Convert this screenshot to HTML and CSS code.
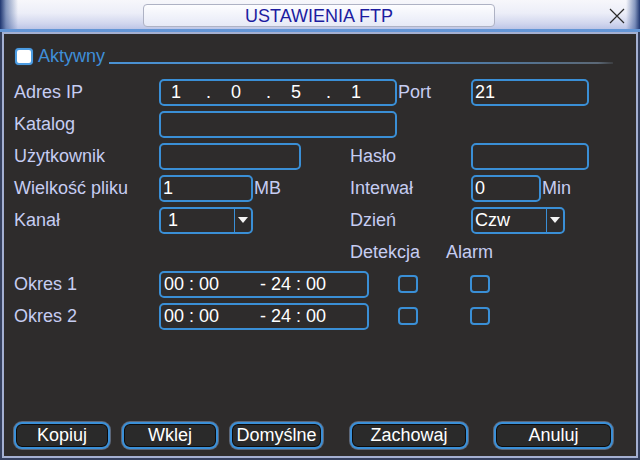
FILE: index.html
```html
<!DOCTYPE html>
<html lang="pl">
<head>
<meta charset="utf-8">
<title>Ustawienia FTP</title>
<link rel="stylesheet" href="styles.css">
</head>
<body>
<div class="window">
  <div class="titlebar">
    <div class="title">USTAWIENIA FTP</div>
    <div class="close">
      <svg width="16" height="16" viewBox="0 0 16 16"><path d="M1 1 L15 15 M15 1 L1 15" stroke="#2a2a2a" stroke-width="1.2" fill="none"/></svg>
    </div>
  </div>
  <div class="frame">
    <div class="section-head">
      <span class="check-on"></span>
      <span class="section-title">Aktywny</span>
      <span class="section-line"></span>
    </div>

    <div class="row">
      <span class="lbl">Adres IP</span>
      <div class="box ip">
        <span class="oct">1</span><span class="dot">.</span>
        <span class="oct">0</span><span class="dot">.</span>
        <span class="oct">5</span><span class="dot">.</span>
        <span class="oct">1</span>
      </div>
      <span class="port-lbl">Port</span>
      <div class="box w118">21</div>
    </div>

    <div class="row">
      <span class="lbl">Katalog</span>
      <div class="box w238"></div>
    </div>

    <div class="row">
      <div class="left">
        <span class="lbl">Użytkownik</span>
        <div class="box w142"></div>
      </div>
      <div class="right">
        <span class="rlbl">Hasło</span>
        <div class="box w118"></div>
      </div>
    </div>

    <div class="row">
      <div class="left">
        <span class="lbl">Wielkość pliku</span>
        <div class="box w94">1</div>
        <span class="unit">MB</span>
      </div>
      <div class="right">
        <span class="rlbl">Interwał</span>
        <div class="box w70">0</div>
        <span class="unit">Min</span>
      </div>
    </div>

    <div class="row">
      <div class="left">
        <span class="lbl">Kanał</span>
        <div class="box combo w94"><span class="combo-val indent">1</span><span class="arrow"></span></div>
      </div>
      <div class="right">
        <span class="rlbl">Dzień</span>
        <div class="box combo w94"><span class="combo-val">Czw</span><span class="arrow"></span></div>
      </div>
    </div>

    <div class="row">
      <div class="left"></div>
      <div class="right">
        <span class="col-head">Detekcja</span>
        <span>Alarm</span>
      </div>
    </div>

    <div class="row">
      <span class="lbl">Okres 1</span>
      <div class="box time"><span>00 : 00</span><span class="time-end">- 24 : 00</span></div>
      <span class="cb cb-det"></span>
      <span class="cb cb-alarm"></span>
    </div>

    <div class="row">
      <span class="lbl">Okres 2</span>
      <div class="box time"><span>00 : 00</span><span class="time-end">- 24 : 00</span></div>
      <span class="cb cb-det"></span>
      <span class="cb cb-alarm"></span>
    </div>

    <div class="spacer"></div>

    <div class="buttons">
      <button class="btn b-kopiuj">Kopiuj</button>
      <button class="btn b-wklej">Wklej</button>
      <button class="btn b-dom">Domyślne</button>
      <button class="btn b-zach">Zachowaj</button>
      <button class="btn b-anul">Anuluj</button>
    </div>
  </div>
</div>
</body>
</html>
```

FILE: styles.css
```css
html, body {
  margin: 0;
  padding: 0;
}
body {
  width: 640px;
  height: 460px;
  overflow: hidden;
  font-family: "Liberation Sans", Arial, sans-serif;
  font-size: 18px;
  background: #3a4260;
}
.window {
  width: 640px;
  height: 460px;
  display: flex;
  flex-direction: column;
  background: #35405e;
}
.titlebar {
  height: 29px;
  flex: none;
  display: flex;
  align-items: flex-start;
  border-bottom: 3px solid #6496d6;
  background:
    linear-gradient(to right, #1f3670 0px, rgba(60,90,150,0.6) 6px, rgba(230,232,245,0) 18px),
    linear-gradient(to left, #1f3670 0px, rgba(60,90,150,0.6) 5px, rgba(230,232,245,0) 14px),
    linear-gradient(to bottom, #f7f7fb 0%, #eceef8 45%, #d2d7ee 80%, #bcc5e6 100%);
}
.title {
  margin-left: 143px;
  margin-top: 4px;
  width: 350px;
  height: 21px;
  border: 1px solid #aeb2c4;
  border-radius: 4px;
  background: linear-gradient(to bottom, #fdfdff, #e6e9f6);
  color: #1c1ca0;
  text-align: center;
  line-height: 22px;
}
.close {
  margin-left: 114px;
  margin-top: 8px;
  width: 16px;
  height: 16px;
}
.close svg {
  display: block;
}
.frame {
  flex: 1;
  margin: 0 2px 2px 2px;
  border: 2px solid #a4b0d2;
  background: #2e2c2c;
  display: flex;
  flex-direction: column;
  padding-left: 10px;
  color: #c6cdf2;
}
.section-head {
  height: 42px;
  flex: none;
  display: flex;
  align-items: center;
  padding-top: 2px;
  box-sizing: border-box;
}
.check-on {
  width: 14px;
  height: 13px;
  margin-left: 1px;
  border: 2px solid #4c9ce2;
  border-radius: 4px;
  background: #ffffff;
  box-shadow: 0 0 1px #2f6fb0;
}
.section-title {
  margin-left: 5px;
  color: #3f8fd8;
}
.section-line {
  flex: 1;
  height: 2px;
  margin: 14px 23px 0 4px;
  background: linear-gradient(to right, #4a92d4 0%, #4a84bc 60%, #5b6876 97%, rgba(90,100,110,0.3) 100%);
}
.row {
  height: 32px;
  flex: none;
  display: flex;
  align-items: center;
}
.left {
  width: 336px;
  display: flex;
  align-items: center;
}
.right {
  display: flex;
  align-items: center;
}
.lbl {
  width: 145px;
  flex: none;
}
.rlbl {
  width: 121px;
  flex: none;
}
.port-lbl {
  width: 73px;
  padding-left: 1px;
  flex: none;
}
.col-head {
  width: 96px;
}
.box {
  height: 27px;
  box-sizing: border-box;
  border: 2px solid #3a8fd6;
  border-radius: 5px;
  color: #ffffff;
  line-height: 23px;
  padding-left: 2px;
  display: flex;
  align-items: center;
  flex: none;
}
.w238 { width: 238px; }
.w142 { width: 142px; }
.w118 { width: 118px; }
.w94 { width: 94px; }
.w70 { width: 70px; }
.ip {
  width: 238px;
  padding-left: 10px;
}
.oct {
  width: 10px;
  text-align: center;
}
.dot {
  width: 50px;
  padding-left: 25px;
  box-sizing: border-box;
}
.unit {
  margin-left: 1px;
}
.combo {
  padding-left: 2px;
}
.combo-val {
  flex: 1;
}
.combo-val.indent {
  padding-left: 5px;
}
.arrow {
  width: 17px;
  height: 23px;
  border-left: 1px solid #3a8fd6;
  box-sizing: border-box;
  display: flex;
  align-items: center;
  justify-content: center;
}
.arrow::after {
  content: "";
  border-left: 5px solid transparent;
  border-right: 5px solid transparent;
  border-top: 6px solid #f4f4f4;
}
.time {
  width: 210px;
  padding-left: 3px;
}
.time-end {
  margin-left: 41px;
}
.cb {
  width: 20px;
  height: 18px;
  box-sizing: border-box;
  border: 2px solid #3a8fd6;
  border-radius: 4px;
  flex: none;
}
.cb-det {
  margin-left: 29px;
}
.cb-alarm {
  margin-left: 52px;
}
.spacer {
  flex: 1;
}
.buttons {
  flex: none;
  display: flex;
  padding-bottom: 7px;
}
.btn {
  height: 27px;
  box-sizing: border-box;
  border: 2px solid #3b90d8;
  border-radius: 8px;
  background: #2a2a2a;
  box-shadow: inset 0 0 0 1px #0c0c0c, 0 0 0 1px rgba(150,175,215,0.45);
  color: #ffffff;
  font-family: "Liberation Sans", Arial, sans-serif;
  font-size: 18px;
  line-height: 21px;
  padding: 0;
  text-align: center;
}
.b-kopiuj { width: 96px; }
.b-wklej { width: 96px; margin-left: 12px; }
.b-dom { width: 93px; margin-left: 12px; }
.b-zach { width: 118px; margin-left: 27px; }
.b-anul { width: 119px; margin-left: 26px; }
```
